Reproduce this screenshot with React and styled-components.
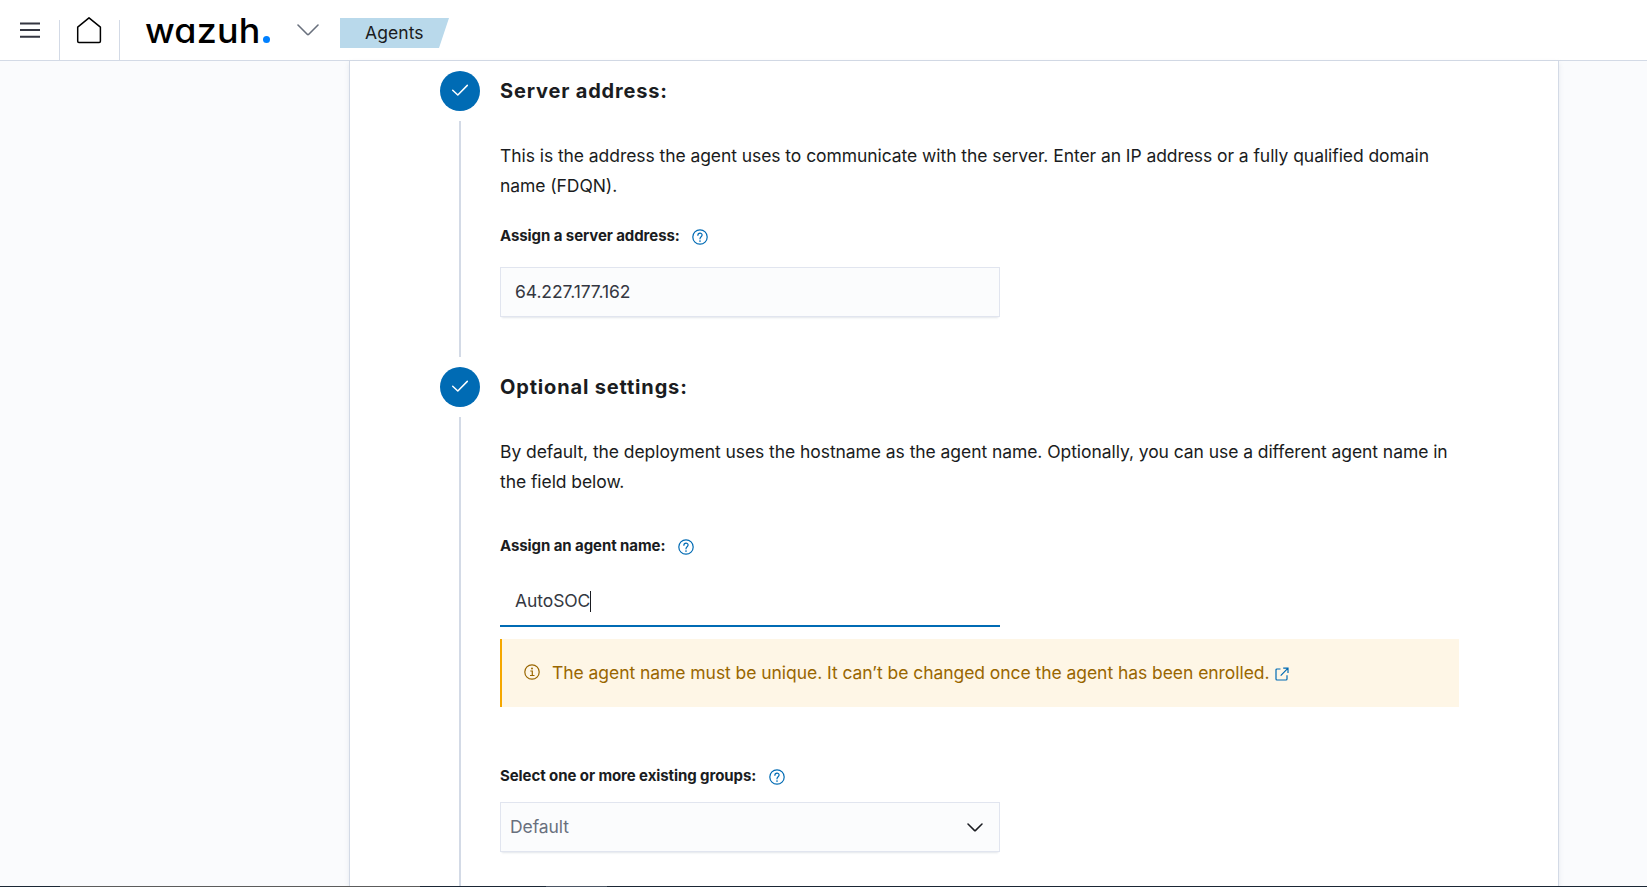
import React from "react";
import styled, { createGlobalStyle } from "styled-components";

const Global = createGlobalStyle`
  *, *::before, *::after { box-sizing: border-box; }
  html, body { margin: 0; padding: 0; height: 100%; overflow: hidden; }
  body {
    background: #fafbfd;
    color: #1a1c21;
    font-family: Inter, "Liberation Sans", sans-serif;
    font-size: 17.5px;
    font-weight: 400;
    line-height: 30px;
  }
  h2, p { margin: 0; }
`;

const Page = styled.div`
  display: flex;
  flex-direction: column;
  height: 887px;
  overflow: hidden;
`;

const Header = styled.header`
  display: flex;
  align-items: flex-end;
  flex: 0 0 61px;
  background: #fff;
  border-bottom: 1px solid #d3dae6;
`;

const HeaderCell = styled.div`
  display: flex;
  width: 60px;
  height: 40px;
  border-right: 1px solid #d3dae6;
  svg { display: block; overflow: visible; }
`;

const BrandButton = styled.div`
  display: flex;
  align-self: stretch;
  align-items: flex-start;
  width: 220px;
  padding-left: 25px;
`;

const BrandName = styled.span`
  width: 118px;
  margin-top: 9px;
  color: #000;
  font-size: 34px;
  font-weight: 500;
  line-height: 43px;
  letter-spacing: 0.2px;
  font-feature-settings: "cv11";
  transform: scaleX(1.055);
  transform-origin: left;
`;

const BrandDot = styled.i`
  width: 7px;
  height: 7px;
  margin-top: 36px;
  border-radius: 50%;
  background: #0080ff;
`;

const BrandChevron = styled.svg`
  margin: 24px 0 0 27px;
`;

const Crumb = styled.span`
  align-self: flex-start;
  width: 109px;
  height: 30px;
  margin-top: 18px;
  padding-left: 25px;
  background: #b9d9eb;
  clip-path: polygon(0 0, 100% 0, calc(100% - 10px) 100%, 0 100%);
  line-height: 30px;
  letter-spacing: 0.08px;
`;

const Body = styled.main`
  display: flex;
  flex: 1;
  min-height: 0;
  padding-left: 349px;
`;

const Panel = styled.section`
  width: 1210px;
  padding: 10px 99px 0 90px;
  background: #fff;
  border: solid #d3dae6;
  border-width: 0 1px;
  box-shadow: 0 2px 5px rgba(152, 162, 179, 0.2);
`;

const Step = styled.div`
  display: flex;
  gap: 20px;
  height: ${(p) => p.$height}px;
`;

const Rail = styled.div`
  display: flex;
  flex-direction: column;
  align-items: center;
  gap: 10px;
  width: 40px;
  padding-bottom: 10px;
`;

const StepBadge = styled.div`
  display: flex;
  align-items: center;
  justify-content: center;
  flex: 0 0 40px;
  width: 40px;
  border-radius: 50%;
  background: #006bb4;
`;

const RailLine = styled.div`
  flex: 1;
  width: 2px;
  background: #d3dae6;
`;

const StepContent = styled.div`
  flex: 1;
  min-width: 0;
`;

const StepTitle = styled.h2`
  margin-bottom: 30px;
  font-size: 20px;
  font-weight: 700;
  line-height: 40px;
  letter-spacing: 0.83px;
`;

const Description = styled.p`
  letter-spacing: -0.066px;
`;

const FieldLabel = styled.div`
  display: flex;
  align-items: center;
  gap: 12.5px;
  margin-top: ${(p) => p.$gap}px;
  font-size: 15px;
  font-weight: 700;
  line-height: 20px;
  letter-spacing: -0.08px;
  svg { margin-top: 2px; }
`;

const Field = styled.div`
  display: flex;
  align-items: center;
  width: 500px;
  height: 50px;
  margin-top: ${(p) => p.$gap}px;
  padding: 0 ${(p) => (p.$select ? "16px 0 9px" : "15px 0 14px")};
  color: ${(p) => (p.$select ? "#69707d" : "#343741")};
  background: ${(p) => (p.$focused ? "#fff" : "#fbfcfd")};
  border: 1px solid #e1e5ef;
  letter-spacing: -0.08px;
  ${(p) =>
    p.$focused
      ? "border-width: 0 0 2px; border-bottom-color: #006bb4; padding-left: 15px;"
      : "box-shadow: 0 1px 1px -1px rgba(152,162,179,.2), 0 3px 2px -2px rgba(152,162,179,.25);"}
  svg { margin-left: auto; }
`;

const Caret = styled.i`
  width: 1px;
  height: 21px;
  background: #1a1c21;
`;

const Callout = styled.div`
  display: flex;
  align-items: center;
  height: 68px;
  margin-top: 12px;
  padding-left: 22px;
  color: #996600;
  background: #fef6e6;
  border-left: 2px solid #f5a700;
  letter-spacing: -0.055px;
  svg:first-child { margin: -3px 12px 0 0; }
  svg:last-child { margin: 2px 0 0 6px; }
`;

const Taskbar = styled.footer`
  display: flex;
  flex: 0 0 1px;
  background: #1b2735;
`;

const TaskbarItem = styled.i`
  width: ${(p) => p.$width}px;
  margin-left: ${(p) => p.$offset}px;
  background: ${(p) => p.$color};
`;

const CheckIcon = () => (
  <svg width="20" height="20" viewBox="0 0 20 20" fill="none" stroke="#fff" strokeWidth="1.5" strokeLinecap="round" strokeLinejoin="round">
    <path d="M2.7 9.2 7.8 14 17.3 4.4" />
  </svg>
);

const HelpIcon = () => (
  <svg width="16" height="16" viewBox="0 0 16 16" fill="none" stroke="#006bb4" strokeWidth="1.2">
    <circle cx="8" cy="8" r="7.2" />
    <path d="M5.9 6.3C5.9 3.5 10.1 3.5 10.1 6.1C10.1 7.7 8 7.9 8 9.8" strokeLinecap="round" />
    <circle cx="8" cy="12" r=".85" fill="#006bb4" stroke="none" />
  </svg>
);

const InfoIcon = () => (
  <svg width="16" height="16" viewBox="0 0 16 16" fill="none" stroke="#996600" strokeWidth="1.2">
    <circle cx="8" cy="8" r="7.2" />
    <path d="M6.3 7H8.3V11.4M6 11.5H10.5" />
    <circle cx="8" cy="4.5" r=".95" fill="#996600" stroke="none" />
  </svg>
);

const ExternalIcon = () => (
  <svg width="14" height="14" viewBox="0 0 14 14" fill="none" stroke="#006bb4" strokeWidth="1.2">
    <path d="M5.5 2H2Q1 2 1 3V12Q1 13 2 13H11Q12 13 12 12V8.2M8.2 1.2H13V6M12.8 1.4 5.7 8.7" />
  </svg>
);

const Assign = ({ gap, children }) => (
  <FieldLabel $gap={gap}>
    {children}
    <HelpIcon />
  </FieldLabel>
);

const StepBlock = ({ title, height, children }) => (
  <Step $height={height}>
    <Rail>
      <StepBadge>
        <CheckIcon />
      </StepBadge>
      <RailLine />
    </Rail>
    <StepContent>
      <StepTitle>{title}</StepTitle>
      {children}
    </StepContent>
  </Step>
);

export default function App() {
  return (
    <>
      <Global />
      <Page>
        <Header>
          <HeaderCell>
            <svg width="60" height="40" viewBox="0 20 60 40" fill="none" stroke="#343741" strokeWidth="2">
              <path d="M20 23.5H40M20 30.1H40M20 36.8H40" />
            </svg>
          </HeaderCell>
          <HeaderCell>
            <svg width="60" height="40" viewBox="60 20 60 40" fill="none" stroke="#000" strokeWidth="1.5" strokeLinejoin="round">
              <path d="M77.7 27.1 89 17.8 100.4 27.1V41.2Q100.4 42.4 99.2 42.4H78.9Q77.7 42.4 77.7 41.2Z" />
            </svg>
          </HeaderCell>
          <BrandButton>
            <BrandName>wazuh</BrandName>
            <BrandDot />
            <BrandChevron width="22" height="12" viewBox="0 0 22 12" fill="none" stroke="#69707d" strokeWidth="1.6" strokeLinecap="round" strokeLinejoin="round">
              <path d="M1 1 10.2 10.2Q11 11 11.8 10.2L21 1" />
            </BrandChevron>
          </BrandButton>
          <Crumb>Agents</Crumb>
        </Header>
        <Body>
          <Panel>
            <StepBlock title="Server address:" height={296}>
              <Description>
                This is the address the agent uses to communicate with the server. Enter an IP address or a fully qualified domain name (FDQN).
              </Description>
              <Assign gap={25}>Assign a server address:</Assign>
              <Field $gap={21}>64.227.177.162</Field>
            </StepBlock>
            <StepBlock title="Optional settings:" height={560}>
              <Description>
                By default, the deployment uses the hostname as the agent name. Optionally, you can use a different agent name in the field below.
              </Description>
              <Assign gap={39}>Assign an agent name:</Assign>
              <Field $gap={21} $focused>
                AutoSOC
                <Caret />
              </Field>
              <Callout>
                <InfoIcon />
                <span>The agent name must be unique. It can’t be changed once the agent has been enrolled.</span>
                <ExternalIcon />
              </Callout>
              <Assign gap={59}>Select one or more existing groups:</Assign>
              <Field $gap={16} $select>
                Default
                <svg width="16" height="9" viewBox="0 0 16 9" fill="none" stroke="#1a1c21" strokeWidth="1.5" strokeLinecap="round" strokeLinejoin="round">
                  <path d="M1 1 7.4 7.4Q8 8 8.6 7.4L15 1" />
                </svg>
              </Field>
            </StepBlock>
          </Panel>
        </Body>
        <Taskbar>
          <TaskbarItem $offset={60} $width={360} $color="#5c5c5c" />
          <TaskbarItem $offset={126} $width={61} $color="#4b5563" />
        </Taskbar>
      </Page>
    </>
  );
}
